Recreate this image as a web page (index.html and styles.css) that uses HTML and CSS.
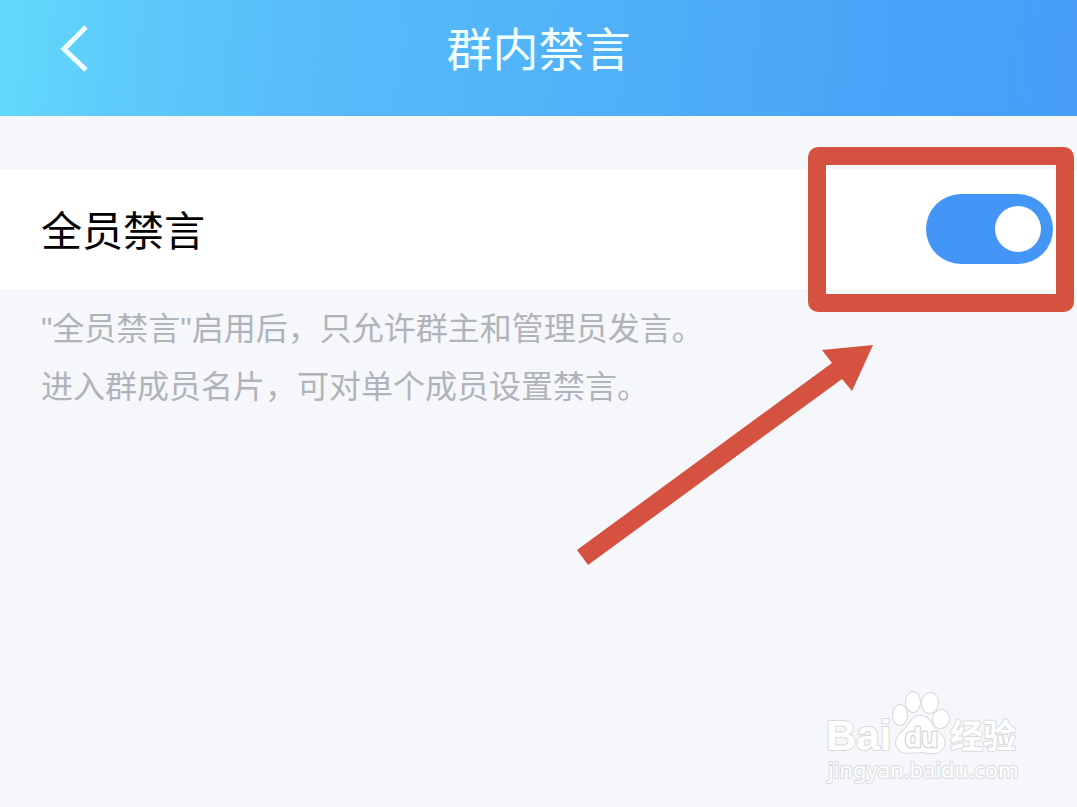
FILE: index.html
```html
<!DOCTYPE html>
<html lang="zh-CN">

<head>
    <meta charset="UTF-8">
    <meta name="viewport" content="width=device-width, initial-scale=1.0">
    <title>群内禁言</title>
    <link rel="stylesheet" href="styles.css">
</head>

<body>
    <header class="navbar">
        <button class="back" type="button" aria-label="返回">
            <svg width="32" height="48" viewBox="0 0 32 48">
                <path d="M28 3 L6 25 L28 46" fill="none" stroke="#f0ffff" stroke-width="5" />
            </svg>
        </button>
        <h1 class="title">群内禁言</h1>
    </header>
    <main>
        <div class="row">
            <label class="label" for="mute-all">全员禁言</label>
            <input class="switch" id="mute-all" type="checkbox" role="switch" checked>
            <div class="frame"></div>
            <svg class="arrow" width="300" height="224" viewBox="0 0 300 224">
                <polygon points="298,2 247,7 257,20 2,207 13,222 267,36 277,48" fill="#d65240" />
            </svg>
        </div>
        <p class="note">"全员禁言"启用后，只允许群主和管理员发言。<br>进入群成员名片，可对单个成员设置禁言。</p>
    </main>
    <div class="watermark">
        <svg width="200" height="100" viewBox="0 0 200 100">
            <g class="mark">
                <text class="bai" x="3" y="62">Bai</text>
                <ellipse cx="77" cy="27" rx="7" ry="10" />
                <ellipse cx="90" cy="14" rx="7" ry="10" />
                <ellipse cx="107" cy="15" rx="8" ry="10" transform="rotate(10 107 15)" />
                <ellipse cx="118" cy="31" rx="8" ry="9" transform="rotate(15 118 31)" />
                <path d="M98 28 C88 28 87 36 81 42 C75 47 71 53 74 59 C79 68 91 64 99 64 C107 65 117 68 121 58 C124 49 116 46 111 39 C107 33 105 28 98 28 Z" />
                <text class="du" x="82" y="59">du</text>
                <text class="exp" x="127" y="60">经验</text>
                <text class="url" x="5" y="90">jingyan.baidu.com</text>
            </g>
        </svg>
    </div>
</body>

</html>
```
FILE: styles.css
```css
body {
    margin: 0;
    min-height: 100vh;
    position: relative;
    background-color: #f5f7fb;
    font-family: "Noto Sans CJK SC", sans-serif;
}

.navbar {
    height: 116px;
    display: grid;
    grid-template-columns: 120px 1fr 120px;
    background: linear-gradient(95deg, #62dafa 0%, #5dcbfa 11%, #57bcfa 29%, #50b1f8 55%, #48a2f7 85%, #479ff7 100%);
}

.back {
    height: 48px;
    margin: 24px 0 0 58px;
    padding: 0;
    border: 0;
    background: none;
    text-align: left;
    cursor: pointer;
}

.title {
    margin: 12px 0 0;
    font-size: 46px;
    font-weight: 400;
    line-height: 68px;
    text-align: center;
    color: #f0ffff;
}

.row {
    position: relative;
    display: flex;
    align-items: center;
    justify-content: space-between;
    height: 120px;
    margin-top: 53px;
    padding: 0 24px 0 41px;
    background-color: #fff;
}

.label {
    padding-bottom: 2px;
    font-size: 41px;
    color: #000;
}

.switch {
    appearance: none;
    display: flex;
    justify-content: flex-end;
    width: 127px;
    height: 70px;
    margin: 0;
    padding: 12px;
    border-radius: 35px;
    background-color: #4396f5;
    cursor: pointer;
}

.switch::before {
    content: "";
    width: 46px;
    height: 46px;
    border-radius: 50%;
    background-color: #fff;
}

.switch:not(:checked) {
    justify-content: flex-start;
    background-color: #ccc;
}

.frame {
    position: absolute;
    top: -22px;
    right: 3px;
    width: 230px;
    height: 129px;
    border: 18px solid #d65240;
    border-radius: 10px;
    pointer-events: none;
}

.arrow {
    position: absolute;
    top: 174px;
    right: 202px;
    pointer-events: none;
}

.note {
    margin: 11px 41px 0;
    font-family: "Liberation Sans", "Noto Sans CJK SC", sans-serif;
    font-size: 32px;
    line-height: 58px;
    color: #b1b3ba;
}

.watermark {
    position: absolute;
    right: 54px;
    bottom: 19px;
    height: 100px;
}

.mark {
    fill: #fff;
    stroke: #d9dade;
    stroke-width: 2px;
    stroke-linejoin: round;
    paint-order: stroke;
}

.bai {
    font: bold 42px "Liberation Sans", sans-serif;
}

.du {
    font: bold 27px "Liberation Sans", sans-serif;
    stroke-width: 3px;
}

.exp {
    font: bold 33px "Noto Sans CJK SC", sans-serif;
}

.url {
    font: 22px "Noto Sans", sans-serif;
}
```
